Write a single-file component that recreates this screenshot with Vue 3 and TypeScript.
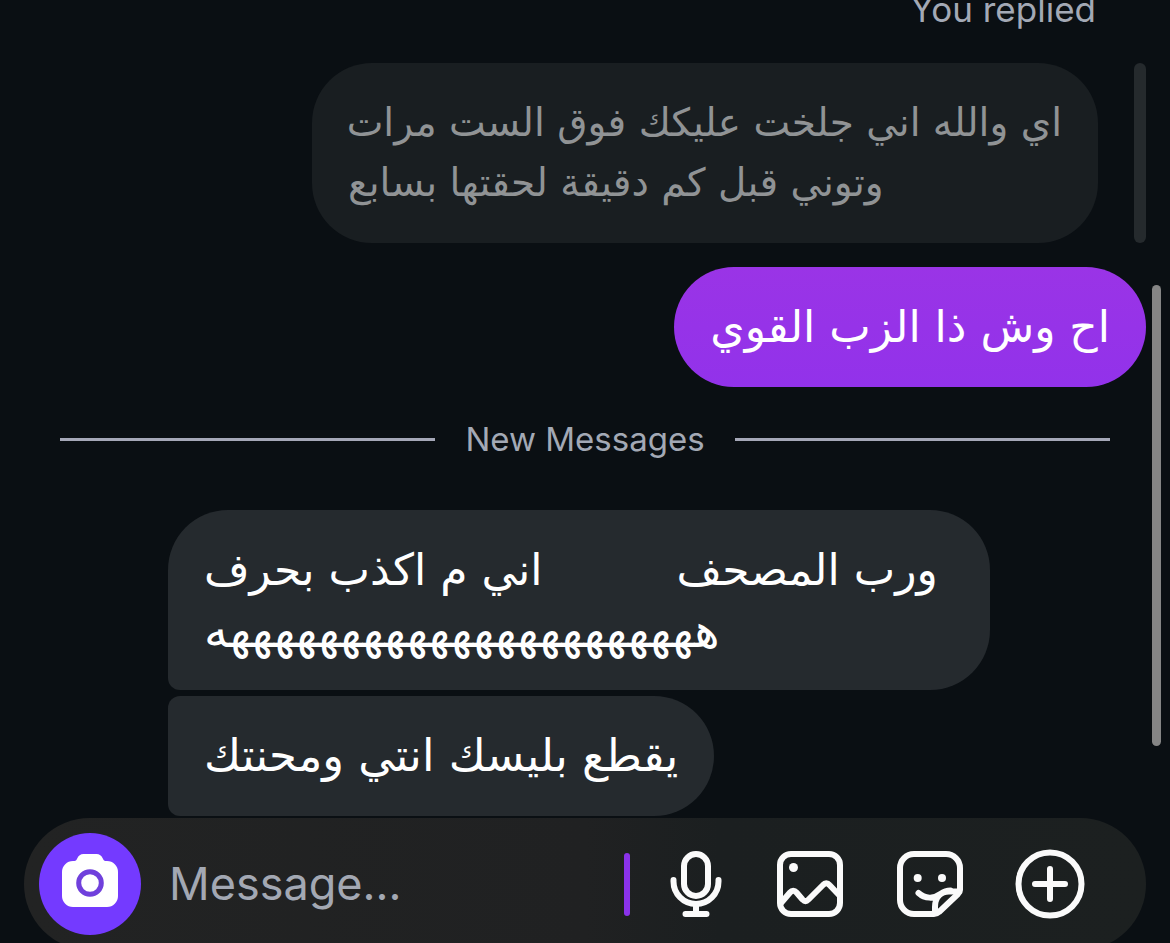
<script setup lang="ts">
import { ref } from 'vue'

const draft = ref('')
const quoted: string[] = [
  'اي والله اني جلخت عليكك فوق الست مرات',
  'وتوني قبل كم دقيقة لحقتها بسابع',
]
const laugh: string = 'ه'.repeat(23)
</script>

<template>
  <main class="chat">
    <section class="thread" aria-label="Conversation">
      <p class="replied">You replied</p>
      <div class="quote-row">
        <blockquote class="bubble quote" dir="rtl" lang="ar">
          <span v-for="line in quoted" :key="line" class="line">{{ line }}</span>
        </blockquote>
        <span class="quote-bar"></span>
      </div>
      <p class="bubble sent" dir="rtl" lang="ar">اح وش ذا الزب القوي</p>

      <div class="divider" role="separator">
        <span class="rule"></span>
        <span>New Messages</span>
        <span class="rule"></span>
      </div>

      <div class="bubble received first" dir="rtl" lang="ar">
        <span class="line">ورب المصحف<span class="gap"></span>اني م اكذب بحرف</span>
        <span class="line laugh">{{ laugh }}</span>
      </div>
      <p class="bubble received last" dir="rtl" lang="ar">يقطع بليسك انتي ومحنتك</p>
      <span class="scrollbar"></span>
    </section>

    <form class="composer" @submit.prevent>
      <button class="camera" type="button" aria-label="Camera">
        <svg viewBox="0 0 56 60" width="56" height="60">
          <path fill="#fff" d="M11 7h1.500c1.500 0 2-1 2.700-2.500C16.500 1.500 18.500 0 21.500 0h13c3 0 5 1.500 6.300 4.500C41.500 6 42 7 43.500 7H45a11 11 0 0 1 11 11v24a11 11 0 0 1-11 11H11A11 11 0 0 1 0 42V18A11 11 0 0 1 11 7Z" />
          <circle cx="28" cy="29" r="11.300" fill="#fff" stroke="#7040dc" stroke-width="5" />
        </svg>
      </button>
      <input v-model="draft" class="field" type="text" placeholder="Message..." aria-label="Message" />
      <span class="caret"></span>
      <div class="tools">
        <button type="button" aria-label="Voice message">
          <svg viewBox="6 0 60 72" width="60" height="72">
            <rect x="24" y="6" width="24" height="42" rx="12" />
            <path d="M13.500 32v1.500a22.500 22.500 0 0 0 45 0v-1.500M36 57v8M25.500 66h21" />
          </svg>
        </button>
        <button type="button" aria-label="Photo">
          <svg viewBox="0 0 72 72" width="72" height="72">
            <rect x="6" y="6" width="60" height="60" rx="11" />
            <circle cx="19.500" cy="19.500" r="4.500" class="dot" />
            <path d="m7 55 9-10.500c2-2.300 4.500-2.300 6.500 0l6 7c2 2 4 2 6 0L49 37c2-2.300 4.500-2.300 6.500 0L65 47" />
          </svg>
        </button>
        <button type="button" aria-label="Sticker">
          <svg viewBox="0 0 72 72" width="72" height="72">
            <path d="M40 66H20A14 14 0 0 1 6 52V20A14 14 0 0 1 20 6h32a14 14 0 0 1 14 14v22c0 2-1 3-2 4L45 64c-1 1-2.500 2-5 2Z" />
            <path d="M41 65V59c0-10 6-15.500 14-15.500h10M24.500 45c6.500 6 15.500 6 22 1 3.500-2.500 6-3.500 10-3.500" />
            <circle cx="23.700" cy="30" r="4" class="dot" />
            <circle cx="48" cy="30" r="4" class="dot" />
          </svg>
        </button>
        <button type="button" aria-label="More">
          <svg viewBox="0 0 72 72" width="72" height="72">
            <circle cx="36" cy="36" r="31.500" />
            <path d="M36 21v30M21 36h30" />
          </svg>
        </button>
      </div>
    </form>
  </main>
</template>

<style>
body {
  background: #0a0f13;
  overflow: hidden;
}
</style>

<style scoped>
.chat {
  height: 100vh;
  overflow: hidden;
  box-sizing: border-box;
  font-family: Inter, "Liberation Sans", sans-serif;
  background: #0a0f13;
}
.thread {
  position: relative;
  display: flex;
  flex-direction: column;
  padding: 0 24px 2px;
}
.replied {
  margin: 0 50px 0 0;
  height: 63px;
  line-height: 18px;
  text-align: right;
  font-size: 35px;
  color: #a3a9b5;
}
.quote-row {
  display: flex;
  justify-content: flex-end;
  gap: 36px;
}
.quote-bar {
  width: 12px;
  border-radius: 6px;
  background: #252a2d;
}
.bubble {
  margin: 0;
  box-sizing: border-box;
  padding: 30px 36px;
  border-radius: 60px;
  font-family: "DejaVu Sans", sans-serif;
  font-size: 44px;
  line-height: 60px;
  text-align: left;
  white-space: nowrap;
  color: #fff;
}
.line {
  display: block;
}
.quote {
  width: 786px;
  font-size: 39px;
  color: #909395;
  background: #191e21;
}
.sent {
  align-self: flex-end;
  margin-top: 24px;
  background: linear-gradient(#9a34e6, #9232ea);
}
.divider {
  display: flex;
  align-items: center;
  gap: 30px;
  margin: 32px 36px 51px;
  font-size: 33px;
  line-height: 40px;
  color: #a3a9b5;
}
.rule {
  flex: 1;
  height: 3px;
  background: #a5a8b8;
}
.received {
  align-self: flex-start;
  margin-left: 144px;
  background: #252a2e;
}
.first {
  width: 822px;
  border-bottom-left-radius: 12px;
}
.gap {
  display: inline-block;
  width: 134px;
}
.laugh {
  font-size: 48px;
}
.last {
  margin-top: 6px;
  font-size: 45px;
  border-top-left-radius: 12px;
  border-bottom-left-radius: 12px;
}
.scrollbar {
  position: absolute;
  top: 285px;
  right: 9px;
  width: 9px;
  height: 461px;
  border-radius: 5px;
  background: #858585;
}
.composer {
  display: flex;
  align-items: center;
  height: 132px;
  margin: 0 24px;
  padding: 0 60px 0 15px;
  box-sizing: border-box;
  border-radius: 66px;
  background: linear-gradient(90deg, #222323 0%, #202122 50%, #1b1f20 62%, #1c2020 100%);
}
button {
  display: grid;
  place-items: center;
  padding: 0;
  border: 0;
  background: none;
}
.camera {
  flex: none;
  width: 102px;
  height: 102px;
  border-radius: 50%;
  background: #743aff;
}
.field {
  flex: 1;
  min-width: 0;
  margin-left: 28px;
  padding: 0;
  border: 0;
  outline: 0;
  background: none;
  font: 45px/60px Inter, "Liberation Sans", sans-serif;
  color: #fff;
}
.field::placeholder {
  color: #a3a8b3;
  opacity: 1;
}
.caret {
  width: 6px;
  height: 63px;
  margin-right: 36px;
  border-radius: 3px;
  background: #8a32ea;
}
.tools {
  display: flex;
  gap: 48px;
}
.tools svg {
  fill: none;
  stroke: #fafafa;
  stroke-width: 6;
  stroke-linecap: round;
  stroke-linejoin: round;
}
.tools .dot {
  fill: #fafafa;
  stroke: none;
}
</style>
